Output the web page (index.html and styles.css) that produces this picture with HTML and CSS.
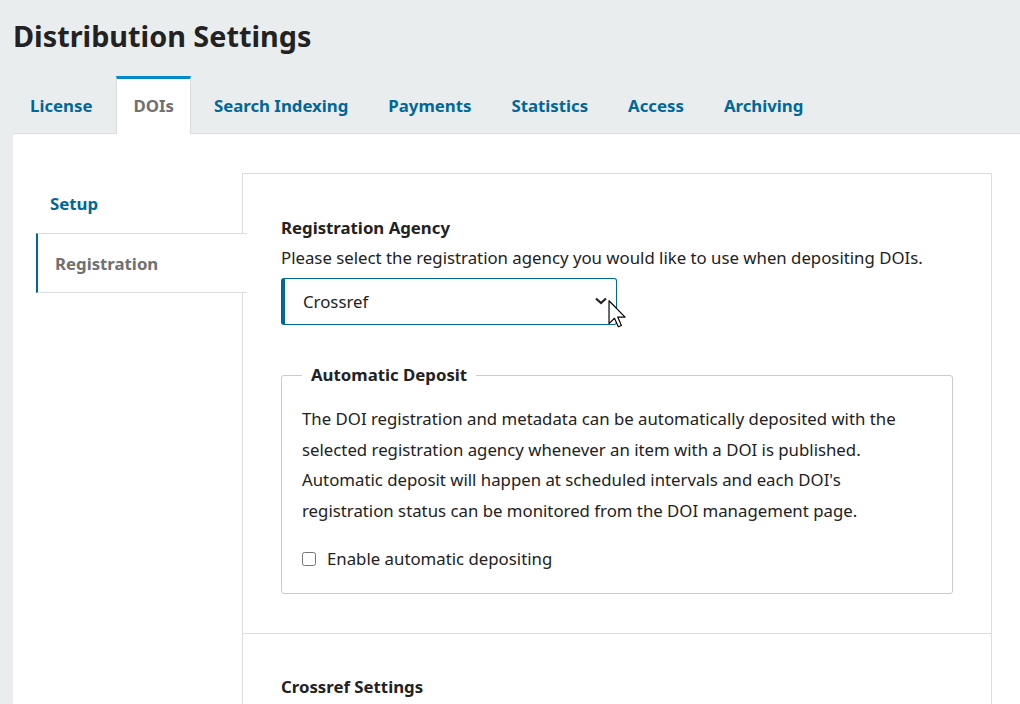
FILE: index.html
```html
<!DOCTYPE html>
<html lang="en">
<head>
<meta charset="utf-8">
<title>Distribution Settings</title>
<link rel="stylesheet" href="styles.css">
</head>
<body>
<div class="page">
  <h1 class="title">Distribution Settings</h1>
  <ul class="tabs">
    <li class="tab">License</li>
    <li class="tab active">DOIs</li>
    <li class="tab">Search Indexing</li>
    <li class="tab">Payments</li>
    <li class="tab">Statistics</li>
    <li class="tab">Access</li>
    <li class="tab">Archiving</li>
  </ul>
  <div class="panel">
    <nav class="sidenav">
      <a class="navitem">Setup</a>
      <a class="navitem active">Registration</a>
    </nav>
    <div class="content">
      <section class="section">
        <div class="field-label">Registration Agency</div>
        <div class="field-desc">Please select the registration agency you would like to use when depositing DOIs.</div>
        <div class="select">
          <span class="select-value">Crossref</span>
          <svg class="chevron" width="12" height="8" viewBox="0 0 12 8"><path d="M1 1.5 L6 6 L11 1.5" fill="none" stroke="#222" stroke-width="2.2"/></svg>
        </div>
        <fieldset class="deposit">
          <legend class="legend">Automatic Deposit</legend>
          <p class="deposit-text">The DOI registration and metadata can be automatically deposited with the<br>selected registration agency whenever an item with a DOI is published.<br>Automatic deposit will happen at scheduled intervals and each DOI's<br>registration status can be monitored from the DOI management page.</p>
          <label class="check"><input class="checkbox" type="checkbox"><span>Enable automatic depositing</span></label>
        </fieldset>
      </section>
      <section class="section">
        <h3 class="section-title">Crossref Settings</h3>
      </section>
    </div>
  </div>
  <svg class="cursor" width="19" height="28" viewBox="0 0 12.5 19"><path d="M0.5 0.5 L0.5 16 L4.2 12.4 L6.8 18.2 L8.9 17.3 L6.4 11.6 L11.4 11.6 Z" fill="#fff" stroke="#000" stroke-width="0.8" stroke-linejoin="round"/></svg>
</div>
</body>
</html>
```
FILE: styles.css
```css
* { box-sizing: border-box; }
html, body { margin: 0; padding: 0; }
body {
  background: #eaedee;
  font-family: "Noto Sans", "DejaVu Sans", sans-serif;
  font-size: 16.8px;
  color: #222;
  overflow: hidden;
}
.page { position: relative; min-height: 704px; }
.title {
  margin: 0;
  padding: 17px 0 0 13px;
  font-size: 28.8px;
  line-height: 38px;
  font-weight: 700;
}
.tabs {
  display: flex;
  gap: 6px;
  list-style: none;
  margin: 21px 0 0 13px;
  padding: 0;
}
.tab {
  position: relative;
  z-index: 1;
  height: 58px;
  line-height: 53px;
  padding: 0 17px;
  border-top: 3px solid transparent;
  font-weight: 700;
  color: #006798;
  margin-bottom: -1px;
}
.tab:first-child { margin-right: 1px; }
.tab.active {
  background: #fff;
  border-top-color: #008acb;
  border-left: 1px solid #dcdcdc;
  border-right: 1px solid #dcdcdc;
  padding: 0 16px;
  color: #707070;
}
.panel {
  display: flex;
  align-items: flex-start;
  margin-left: 13px;
  padding: 39px 28px 0 23px;
  background: #fff;
  border-top: 1px solid #ddd;
  min-height: 600px;
}
.sidenav {
  position: relative;
  z-index: 1;
  flex: 0 0 211px;
  margin-right: -5px;
  display: flex;
  flex-direction: column;
}
.navitem {
  display: block;
  padding: 18px 14px 16px;
  line-height: 24px;
  border-top: 1px solid transparent;
  border-bottom: 1px solid transparent;
  font-weight: 700;
  color: #006798;
}
.navitem.active {
  background: #fff;
  border-top-color: #ddd;
  border-bottom-color: #ddd;
  border-left: 2px solid #006798;
  padding-left: 17px;
  color: #707070;
}
.content {
  flex: 1;
  border: 1px solid #ddd;
  border-bottom: none;
  background: #fff;
}
.section {
  padding: 41px 38px 39px;
  border-bottom: 1px solid #ddd;
}
.section:last-child { border-bottom: none; padding-bottom: 200px; }
.field-label {
  font-weight: 700;
  line-height: 26px;
}
.field-desc {
  margin-top: 5px;
  line-height: 24px;
}
.select {
  display: flex;
  align-items: center;
  justify-content: space-between;
  width: 336px;
  height: 47px;
  margin-top: 8px;
  padding: 0 9px 0 18px;
  border: 1px solid #006798;
  border-left: 4px solid #006798;
  border-radius: 3px;
}
.chevron { display: block; margin-top: -1px; }
.deposit {
  margin: 38px 0 0;
  padding: 0 20px 19px;
  border: 1px solid #ccc;
  border-radius: 3px;
  min-width: 0;
}
.legend {
  padding: 0 9px;
  font-weight: 700;
  line-height: 24px;
}
.deposit-text {
  margin: 17px 0 0;
  line-height: 30.6px;
}
.check {
  display: flex;
  align-items: center;
  margin-top: 18px;
  line-height: 30px;
}
.checkbox {
  width: 14px;
  height: 14px;
  margin: 0 11px 0 0;
}
.section-title {
  margin: 0;
  font-size: 16.8px;
  font-weight: 700;
  line-height: 24px;
}
.cursor {
  position: absolute;
  left: 608px;
  top: 300px;
  z-index: 5;
}
```
